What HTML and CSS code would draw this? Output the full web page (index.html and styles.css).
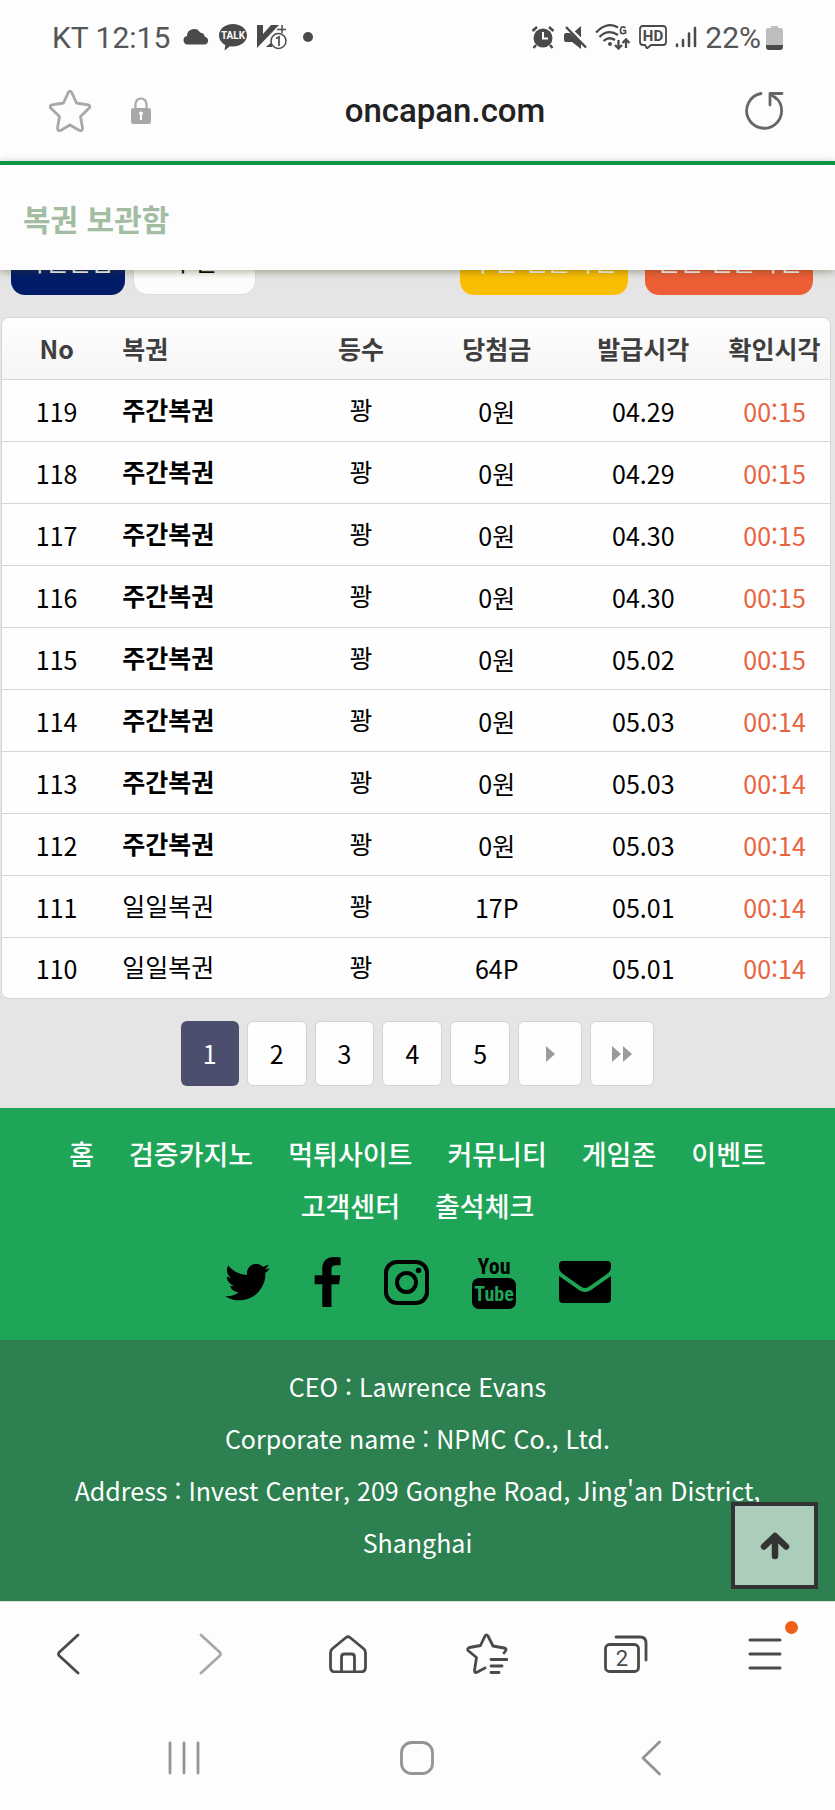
FILE: index.html
```html
<!DOCTYPE html>
<html lang="ko">
<head>
    <meta charset="UTF-8">
    <meta name="viewport" content="width=device-width, initial-scale=1.0">
    <title>복권 보관함</title>
    <link rel="stylesheet" href="styles.css">
</head>
<body>

<div class="status-bar">
    <div class="status-left">
        <span class="status-text carrier">KT 12:15</span>
        <svg width="27" height="16" viewBox="0 0 27 16"><path fill="#4a4a4a" d="M4.500 15.500A4.300 4.300 0 0 1 4 7a7 7 0 0 1 13-3.500c3 .2 4.500 2 4.800 4.300A4 4 0 0 1 22.500 15.500z"/></svg>
        <svg class="talk" width="30" height="28" viewBox="0 0 30 28">
            <path fill="#4a4a4a" d="M15 1c8 0 14 5 14 11.300S23 23.500 15 23.500c-1 0-2-.1-3-.3L6.500 27.500l.8-5.500C3.500 20 1 16.500 1 12.300 1 6 7 1 15 1z"/>
            <text class="talk-text" x="15" y="16" text-anchor="middle">TALK</text>
        </svg>
        <svg width="31" height="26" viewBox="0 0 31 26">
            <path fill="#4a4a4a" d="M1 1h6v9L15 1h8L1 24zM11 22l5-4v5h-6z"/>
            <path stroke="#4a4a4a" stroke-width="1.500" d="M21 5.500h9M26 1v8"/>
            <circle cx="22.500" cy="17" r="7.500" fill="#fff" stroke="#4a4a4a" stroke-width="1.500"/>
            <path fill="none" stroke="#4a4a4a" stroke-width="1.700" d="M20 14.500l3-1.500v9"/>
        </svg>
        <span class="status-dot"></span>
    </div>
    <div class="status-right">
        <svg width="24" height="24" viewBox="0 0 24 24">
            <circle cx="12" cy="13" r="9.500" fill="#4a4a4a"/>
            <path fill="none" stroke="#4a4a4a" stroke-width="2.500" d="M1.500 6L6 2M18 2l4.500 4M5 20l-2.500 3M19 20l2.500 3"/>
            <path fill="none" stroke="#fff" stroke-width="2" d="M12 7v6.500h5"/>
        </svg>
        <svg width="24" height="24" viewBox="0 0 24 24">
            <path fill="#4a4a4a" d="M3 8h4l11 10v6L9 17H3q-2 0-2-2v-5q0-2 2-2zM11 7l7-6v13z"/>
            <path stroke="#fff" stroke-width="2" d="M5 1l19 19"/>
            <path stroke="#4a4a4a" stroke-width="2.500" d="M3 2l20 20.500"/>
        </svg>
        <svg width="36" height="26" viewBox="0 0 36 26">
            <path fill="none" stroke="#4a4a4a" stroke-width="2.300" d="M1 8.500Q12 -3 23 3.500M4.500 13Q13 4.500 23 11M8.500 17Q14 12 20 16"/>
            <circle cx="15" cy="20" r="2" fill="#4a4a4a"/>
            <path fill="none" stroke="#4a4a4a" stroke-width="1.700" d="M30.500 3.800Q26 1 25.500 6t5 3V6.500H28"/>
            <path fill="none" stroke="#4a4a4a" stroke-width="2.300" d="M23.500 16v8.500M20 21l3.500 3.500L27 21M31 24v-8.500M27.500 19l3.500-3.500 3.500 3.500"/>
        </svg>
        <svg width="28" height="24" viewBox="0 0 28 24">
            <path fill="none" stroke="#4a4a4a" stroke-width="1.800" d="M4 1h20q3 0 3 3v13q0 3-3 3H12l-4 3.500-2-3.500H4q-3 0-3-3V4q0-3 3-3z"/>
            <text class="hd-text" x="14" y="16" text-anchor="middle">HD</text>
        </svg>
        <svg width="22" height="22" viewBox="0 0 22 22"><path stroke="#4a4a4a" stroke-width="2.500" stroke-linecap="round" d="M2 18.500v1.500M8 14v6M14 7.500V20M20 2v18"/></svg>
        <div class="battery">
            <span class="status-text">22%</span>
            <svg width="17" height="25" viewBox="0 0 17 25">
                <path fill="#bdbdbd" d="M5 1h7v2h3q2 0 2 2v15H0V5q0-2 2-2h3z"/>
                <path fill="#4a4a4a" d="M0 20h17v2q0 3-3 3H3q-3 0-3-3z"/>
            </svg>
        </div>
    </div>
</div>

<div class="address-bar">
    <button class="icon-btn" aria-label="북마크">
        <svg width="42" height="42" viewBox="0 0 42 42"><path fill="none" stroke="#a8a8a8" stroke-width="2.800" stroke-linejoin="round" d="M19 3q2-3.500 4 0l4.500 10 11.500 1.800q3.500 1 1 3.500l-8.500 8.200 2 11.500q0 3.500-3 2.500L21 35l-9.500 5.500q-3 1-3-2.500l2-11.500L2 18.300q-2.500-2.500 1-3.500L14.500 13z"/></svg>
    </button>
    <svg class="lock" width="20" height="28" viewBox="0 0 20 28">
        <path fill="none" stroke="#a8a8a8" stroke-width="2.200" d="M4.500 13V7a5.500 5.500 0 0 1 11 0v6"/>
        <rect y="11" width="20" height="16" rx="2.500" fill="#a8a8a8"/>
        <path fill="#fff" d="M8 16.500a2 2 0 1 1 4 0l-1 2V23H9v-4.500z"/>
    </svg>
    <span class="url">oncapan.com</span>
    <button class="icon-btn" aria-label="새로고침">
        <svg width="40" height="40" viewBox="0 0 40 40"><path fill="none" stroke="#666" stroke-width="2.800" stroke-linecap="round" stroke-linejoin="round" d="M16 2.500A17.500 17.500 0 1 0 30 6M25 14V2.500h12M25.500 3l6 5"/></svg>
    </button>
</div>

<header class="page-header">
    <h1>복권 보관함</h1>
</header>

<main>
    <div class="tabs">
        <button class="tab navy">확인안함</button>
        <button class="tab white">주간</button>
        <button class="tab yellow">주간 일괄확인</button>
        <button class="tab orange">일일 일괄확인</button>
    </div>

    <table class="lottery">
        <thead>
            <tr>
                <th class="col-no">No</th>
                <th class="col-name">복권</th>
                <th class="col-rank">등수</th>
                <th class="col-prize">당첨금</th>
                <th class="col-issued">발급시각</th>
                <th class="col-checked">확인시각</th>
            </tr>
        </thead>
        <tbody>
            <tr><td>119</td><td class="name"><b>주간복권</b></td><td class="rank">꽝</td><td>0원</td><td>04.29</td><td class="time">00:15</td></tr>
            <tr><td>118</td><td class="name"><b>주간복권</b></td><td class="rank">꽝</td><td>0원</td><td>04.29</td><td class="time">00:15</td></tr>
            <tr><td>117</td><td class="name"><b>주간복권</b></td><td class="rank">꽝</td><td>0원</td><td>04.30</td><td class="time">00:15</td></tr>
            <tr><td>116</td><td class="name"><b>주간복권</b></td><td class="rank">꽝</td><td>0원</td><td>04.30</td><td class="time">00:15</td></tr>
            <tr><td>115</td><td class="name"><b>주간복권</b></td><td class="rank">꽝</td><td>0원</td><td>05.02</td><td class="time">00:15</td></tr>
            <tr><td>114</td><td class="name"><b>주간복권</b></td><td class="rank">꽝</td><td>0원</td><td>05.03</td><td class="time">00:14</td></tr>
            <tr><td>113</td><td class="name"><b>주간복권</b></td><td class="rank">꽝</td><td>0원</td><td>05.03</td><td class="time">00:14</td></tr>
            <tr><td>112</td><td class="name"><b>주간복권</b></td><td class="rank">꽝</td><td>0원</td><td>05.03</td><td class="time">00:14</td></tr>
            <tr><td>111</td><td class="name">일일복권</td><td class="rank">꽝</td><td>17P</td><td>05.01</td><td class="time">00:14</td></tr>
            <tr><td>110</td><td class="name">일일복권</td><td class="rank">꽝</td><td>64P</td><td>05.01</td><td class="time">00:14</td></tr>
        </tbody>
    </table>

    <nav class="pagination">
        <a href="#" class="active">1</a>
        <a href="#">2</a>
        <a href="#">3</a>
        <a href="#">4</a>
        <a href="#">5</a>
        <a href="#" class="arrow" aria-label="다음"><svg width="9" height="16" viewBox="0 0 9 16"><path fill="#9b9b9b" d="M0 0l9 8-9 8z"/></svg></a>
        <a href="#" class="arrow" aria-label="마지막"><svg width="20" height="16" viewBox="0 0 20 16"><path fill="#9b9b9b" d="M0 0l9 8-9 8zM11 0l9 8-9 8z"/></svg></a>
    </nav>
</main>

<footer>
    <div class="footer-top">
        <nav class="footer-nav">
            <a href="#">홈</a>
            <a href="#">검증카지노</a>
            <a href="#">먹튀사이트</a>
            <a href="#">커뮤니티</a>
            <a href="#">게임존</a>
            <a href="#">이벤트</a>
            <a href="#">고객센터</a>
            <a href="#">출석체크</a>
        </nav>
        <div class="social">
            <a href="#" aria-label="Twitter"><svg width="45" height="38" viewBox="44 256 1576 1280"><path d="M1620 408q-67 98-162 167 1 14 1 42 0 130-38 259.500t-115.500 248.500-184.500 210.500-258 146-323 54.500q-271 0-496-145 35 4 78 4 225 0 401-138-105-2-188-64.500t-114-159.500q33 5 61 5 43 0 85-11-112-23-185.500-111.500t-73.500-205.500v-4q68 38 146 41-66-44-105-115t-39-154q0-88 44-163 121 149 294.500 238.500t371.500 99.500q-8-38-8-74 0-134 94.500-228.500t228.500-94.500q140 0 236 102 109-21 205-78-37 115-142 178 93-10 186-50z"/></svg></a>
            <a href="#" aria-label="Facebook"><svg width="28" height="50" viewBox="439 0 904 1664"><path d="M1343 12v264h-157q-86 0-116 36t-30 108v189h293l-39 296h-254v759h-306v-759h-255v-296h255v-218q0-186 104-288.500t277-102.500q147 0 228 12z"/></svg></a>
            <a href="#" aria-label="Instagram"><svg width="45" height="45" viewBox="0 0 45 45" fill="none" stroke="#000" stroke-width="4"><rect x="2" y="2" width="41" height="41" rx="11"/><circle cx="22.500" cy="22.500" r="9.500"/><circle cx="34.500" cy="10.500" r="2.800" fill="#000" stroke="none"/></svg></a>
            <a href="#" aria-label="YouTube"><svg width="44" height="54" viewBox="0 0 44 54">
                <rect y="23" width="44" height="31" rx="7"/>
                <text class="you" x="22" y="19" text-anchor="middle">You</text>
                <text class="tube" x="22" y="46" text-anchor="middle">Tube</text>
            </svg></a>
            <a href="#" aria-label="E-mail"><svg width="52" height="42" viewBox="0 0 52 42"><path d="M4 0h44q4 0 4 4v2q0 4-4 7L31 25q-5 4-10 0L4 13Q0 10 0 6V4q0-4 4-4zM0 15l20 14q6 4 12 0l20-14v23q0 4-4 4H4q-4 0-4-4z"/></svg></a>
        </div>
    </div>
    <div class="footer-info">
        <p>CEO : Lawrence Evans</p>
        <p>Corporate name : NPMC Co., Ltd.</p>
        <p>Address : Invest Center, 209 Gonghe Road, Jing'an District, Shanghai</p>
        <button class="to-top" aria-label="맨 위로">
            <svg width="30" height="30" viewBox="0 0 30 30"><path fill="none" stroke="#333" stroke-width="6.500" stroke-linecap="round" stroke-linejoin="round" d="M4 15.500L15 5l11 10.500M15 6v19"/></svg>
        </button>
    </div>
</footer>

<div class="toolbar">
    <button class="icon-btn" aria-label="뒤로"><svg width="26" height="42" viewBox="0 0 26 42"><path fill="none" stroke="#4a4a4a" stroke-width="2.800" stroke-linecap="round" stroke-linejoin="round" d="M21 2L2 19.500q-1 1.500 0 3L21 40"/></svg></button>
    <button class="icon-btn" aria-label="앞으로"><svg width="26" height="42" viewBox="0 0 26 42"><path fill="none" stroke="#a8a8a8" stroke-width="2.800" stroke-linecap="round" stroke-linejoin="round" d="M5 2l19 17.500q1 1.500 0 3L5 40"/></svg></button>
    <button class="icon-btn" aria-label="홈"><svg width="38" height="38" viewBox="0 0 38 38"><path fill="none" stroke="#4a4a4a" stroke-width="2.800" stroke-linejoin="round" d="M17 2.500q2-1.500 4 0L35 14q1.500 1.500 1.500 4v14q0 5-5 5h-25q-5 0-5-5V18q0-2.500 1.500-4zM12.500 37V22q0-3 3-3h7q3 0 3 3v15"/></svg></button>
    <button class="icon-btn" aria-label="북마크 목록"><svg width="42" height="42" viewBox="0 0 42 42"><path fill="none" stroke="#4a4a4a" stroke-width="2.800" stroke-linecap="round" stroke-linejoin="round" d="M19 35l-8.500 4.500q-2 .5-2-2l2-13L2 17.500q-1-2 1.500-3l11-2L19 3q1.500-2 3 0l5 10 11 2q3 .5 1.500 3L38 20M25 26.500h16M25 33h11M25 39.500h8"/></svg></button>
    <button class="icon-btn" aria-label="탭"><svg width="44" height="38" viewBox="0 0 44 38">
        <path fill="none" stroke="#4a4a4a" stroke-width="2.800" stroke-linecap="round" d="M12 2h24q6 0 6 6v17"/>
        <rect x="1.500" y="9.500" width="33" height="27" rx="4" fill="none" stroke="#4a4a4a" stroke-width="2.800"/>
        <text class="tab-count" x="18" y="31" text-anchor="middle">2</text>
    </svg></button>
    <button class="icon-btn" aria-label="메뉴"><svg width="34" height="34" viewBox="0 0 34 34"><path stroke="#4a4a4a" stroke-width="3" stroke-linecap="round" d="M2 3h30M2 17h30M2 31h30"/></svg><span class="badge"></span></button>
</div>

<div class="system-nav">
    <button class="icon-btn" aria-label="최근 앱"><svg width="34" height="34" viewBox="0 0 34 34"><path stroke="#949494" stroke-width="2.800" stroke-linecap="round" d="M3 2v30M17 2v30M31 2v30"/></svg></button>
    <button class="icon-btn" aria-label="홈 화면"><svg width="34" height="34" viewBox="0 0 34 34"><rect x="1.500" y="1.500" width="31" height="31" rx="10" fill="none" stroke="#949494" stroke-width="2.800"/></svg></button>
    <button class="icon-btn" aria-label="이전"><svg width="20" height="36" viewBox="0 0 20 36"><path fill="none" stroke="#949494" stroke-width="2.800" stroke-linecap="round" stroke-linejoin="round" d="M18.500 2L2 18l16.500 16"/></svg></button>
</div>

</body>
</html>
```
FILE: styles.css
```css
* {
    box-sizing: border-box;
}

body {
    margin: 0;
    background-color: #fdfdfd;
    font-family: "Noto Sans CJK KR", "Noto Sans", sans-serif;
    font-size: 25px;
    color: #000;
}

svg {
    display: block;
    flex-shrink: 0;
}

a {
    color: inherit;
    text-decoration: none;
}

button {
    font-family: inherit;
    font-size: inherit;
    cursor: pointer;
}

.icon-btn {
    display: flex;
    align-items: center;
    justify-content: center;
    padding: 0;
    border: none;
    background: none;
}

/* status bar */
.status-bar {
    display: flex;
    justify-content: space-between;
    align-items: center;
    height: 74px;
    padding: 0 52px;
}

.status-left, .status-right {
    display: flex;
    align-items: center;
    gap: 8px;
}

.status-text {
    font-family: Roboto, sans-serif;
    font-size: 30px;
    color: #555;
}

.carrier {
    margin-right: 5px;
}

.battery {
    display: flex;
    align-items: center;
    gap: 5px;
}

.talk-text {
    font-family: Roboto, sans-serif;
    font-size: 10px;
    font-weight: 700;
    fill: #fff;
}

.hd-text {
    font-family: Roboto, sans-serif;
    font-size: 15px;
    font-weight: 700;
    fill: #4a4a4a;
}

.status-dot {
    width: 10px;
    height: 10px;
    margin-left: 8px;
    border-radius: 50%;
    background-color: #4a4a4a;
}

/* address bar */
.address-bar {
    display: flex;
    align-items: center;
    height: 87px;
    padding: 0 50px 14px 49px;
}

.lock {
    margin-left: 40px;
}

.url {
    flex: 1;
    padding-right: 6px;
    text-align: center;
    font-family: Roboto, sans-serif;
    font-size: 33px;
    font-weight: 500;
    color: #222;
}

/* page header */
.page-header {
    position: relative;
    z-index: 2;
    display: flex;
    align-items: center;
    height: 109px;
    padding: 0 23px;
    border-top: 4px solid #0f9347;
    background-color: #fdfdfd;
    box-shadow: 0 2px 8px rgba(60, 60, 20, 0.4);
}

.page-header h1 {
    margin: 0;
    font-size: 30px;
    color: #a3bda2;
}

main {
    padding-bottom: 22px;
    background-color: #e5e5e5;
}

/* the tab row is scrolled halfway under the header */
.tabs {
    display: flex;
    margin-top: -41px;
    padding: 0 22px 22px 11px;
}

.tab {
    height: 66px;
    padding: 0 0 4px;
    border: none;
    border-radius: 14px;
    color: #fff;
}

.navy {
    width: 114px;
    background-color: #001c69;
}

.white {
    width: 123px;
    margin-left: 8px;
    border: 1px solid #ddd;
    background-color: #fdfdfd;
    color: #000;
}

.yellow {
    width: 168px;
    margin-left: auto;
    background-color: #fbbf02;
}

.orange {
    width: 168px;
    margin-left: 17px;
    background-color: #ee5e36;
}

/* lottery table */
.lottery {
    width: calc(100% - 5px);
    margin: 0 4px 0 1px;
    border: 1px solid #d6d6d6;
    border-radius: 8px;
    border-spacing: 0;
    table-layout: fixed;
    background-color: #fefefe;
    overflow: hidden;
}

.lottery th, .lottery td {
    height: 62px;
    padding: 0;
    border-bottom: 1px solid #d6d6d6;
    text-align: center;
    line-height: 36px;
}

.lottery th {
    padding-bottom: 2px;
    background: linear-gradient(#fefefe, #f5f5f5);
    color: #3e3e3e;
}

.lottery tbody tr:last-child td {
    height: 60px;
    border-bottom: none;
}

.col-no {
    width: 13.2%;
}

.col-rank {
    width: 15.7%;
}

.col-prize {
    width: 17.1%;
}

.col-issued {
    width: 18.3%;
}

.col-checked {
    width: 13.4%;
}

.lottery .col-name, .lottery .name {
    padding-left: 11px;
    text-align: left;
}

.lottery .name, .lottery .rank {
    padding-bottom: 4px;
}

.lottery .time {
    color: #e8633f;
}

/* pagination */
.pagination {
    display: flex;
    justify-content: center;
    gap: 8px;
    margin-top: 22px;
}

.pagination a {
    display: flex;
    align-items: center;
    height: 65px;
    padding: 0 22px 2px;
    border: 1px solid #d2d2d2;
    border-radius: 6px;
    background-color: #fefefe;
}

.pagination .active {
    border: none;
    background-color: #4c4e6e;
    color: #fff;
}

.pagination .arrow {
    justify-content: center;
    width: 64px;
    padding: 0;
}

/* footer */
footer {
    color: #fff;
}

.footer-top {
    padding: 20px 50px 31px;
    background-color: #1fa558;
}

.footer-nav {
    display: flex;
    flex-wrap: wrap;
    justify-content: center;
    column-gap: 35px;
    font-size: 27px;
    font-weight: 500;
    line-height: 52px;
}

.social {
    display: flex;
    justify-content: center;
    align-items: center;
    gap: 43px;
    margin-top: 23px;
}

.you, .tube {
    font-family: "Roboto Condensed", "Liberation Sans Narrow", "DejaVu Sans Condensed", sans-serif;
    font-weight: 700;
    font-size: 22px;
}

.tube {
    font-size: 20px;
    fill: #1fa558;
}

.footer-info {
    position: relative;
    padding: 20px 20px 33px;
    background-color: #2d8050;
    text-align: center;
    line-height: 52px;
}

.footer-info p {
    margin: 0;
}

.to-top {
    position: absolute;
    right: 17px;
    bottom: 12px;
    display: flex;
    align-items: center;
    justify-content: center;
    width: 87px;
    height: 87px;
    border: 4px solid #333;
    background-color: #abcdb9;
}

/* browser toolbar and system buttons */
.toolbar {
    display: grid;
    grid-template-columns: repeat(6, 1fr);
    height: 104px;
    border-top: 1px solid #ddd;
}

.toolbar .icon-btn {
    position: relative;
}

.badge {
    position: absolute;
    top: 19px;
    right: 37px;
    width: 13px;
    height: 13px;
    border-radius: 50%;
    background-color: #ee5f18;
}

.tab-count {
    font-family: Roboto, sans-serif;
    font-size: 22px;
    fill: #4a4a4a;
}

.system-nav {
    display: grid;
    grid-template-columns: repeat(3, 1fr);
    height: 105px;
    padding: 0 67px;
}
```
